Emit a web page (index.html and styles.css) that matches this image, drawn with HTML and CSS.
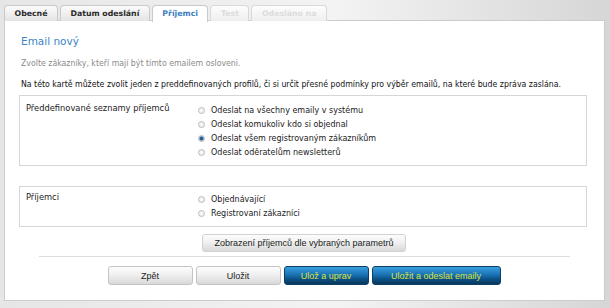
FILE: index.html
```html
<!DOCTYPE html>
<html lang="cs">
<head>
    <meta charset="UTF-8">
    <title>Email nový - Příjemci</title>
    <link rel="stylesheet" href="styles.css">
</head>
<body>
    <div class="page">
        <ul class="tabs">
            <li class="tab">Obecné</li>
            <li class="tab">Datum odeslání</li>
            <li class="tab active">Příjemci</li>
            <li class="tab disabled">Test</li>
            <li class="tab disabled">Odesláno na</li>
        </ul>

        <div class="panel">
            <h1>Email nový</h1>
            <p class="hint">Zvolte zákazníky, kteří mají být tímto emailem osloveni.</p>
            <p class="intro">Na této kartě můžete zvolit jeden z preddefinovaných profilů, či si určit přesné podmínky pro výběr emailů, na které bude zpráva zaslána.</p>

            <div class="field-box">
                <div class="field-label">Předdefinované seznamy příjemců</div>
                <div class="options">
                    <label class="option"><input type="radio" name="preset">Odeslat na všechny emaily v systému</label>
                    <label class="option"><input type="radio" name="preset">Odeslat komukoliv kdo si objednal</label>
                    <label class="option"><input type="radio" name="preset" checked>Odeslat všem registrovaným zákazníkům</label>
                    <label class="option"><input type="radio" name="preset">Odeslat oděratelům newsletterů</label>
                </div>
            </div>

            <div class="field-box second">
                <div class="field-label">Příjemci</div>
                <div class="options">
                    <label class="option"><input type="radio" name="recipients">Objednávající</label>
                    <label class="option"><input type="radio" name="recipients">Registrovaní zákazníci</label>
                </div>
            </div>

            <div class="preview">
                <button type="button" class="btn btn-preview">Zobrazení příjemců dle vybraných parametrů</button>
            </div>

            <hr class="divider">

            <div class="actions">
                <button type="button" class="btn">Zpět</button>
                <button type="button" class="btn">Uložit</button>
                <button type="button" class="btn btn-blue">Ulož a uprav</button>
                <button type="button" class="btn btn-blue btn-send">Uložit a odeslat emaily</button>
            </div>
        </div>
    </div>
</body>
</html>
```

FILE: styles.css
```css
* {
    margin: 0;
    padding: 0;
    box-sizing: border-box;
}

body {
    font-family: 'DejaVu Sans', Verdana, sans-serif;
    background: linear-gradient(to right, #e6e6e6 0%, #f3f3f3 55%, #d6d6d6 100%);
    height: 308px;
    overflow: hidden;
}

.page {
    padding: 5px 5px 0 4px;
}

/* zalozky */
.tabs {
    list-style: none;
    display: flex;
    gap: 2px;
    height: 16px;
    margin-bottom: -1px;
}

.tab {
    position: relative;
    z-index: 1;
    height: 16px;
    padding: 0 9.5px;
    font-size: 7.8px;
    font-weight: bold;
    line-height: 15px;
    color: #2b2b2b;
    background: linear-gradient(#fbfbfb, #e4e4e4);
    border: 1px solid #c9c9c9;
    border-bottom: none;
    border-radius: 4px 4px 0 0;
}

.tab.active {
    height: 17px;
    color: #3a7ebf;
    background: #fff;
}

.tab.disabled {
    color: #dcdcdc;
    background: linear-gradient(#fdfdfd, #eeeeee);
    border-color: #d9d9d9;
}

/* obsah */
.panel {
    background: #fff;
    border: 1px solid #cccccc;
    padding: 14px 17px 15px 16px;
}

h1 {
    font-size: 10.5px;
    font-weight: normal;
    line-height: 13px;
    color: #3c86c6;
}

.hint,
.intro {
    font-family: 'DejaVu Sans Condensed', 'Liberation Sans', sans-serif;
    font-size: 8.7px;
    line-height: 11px;
    margin-top: 10px;
}

.hint {
    color: #8a8a8a;
}

.intro {
    color: #111;
}

.field-box {
    display: flex;
    margin: 5px 0 0 -2px;
    padding: 7px 6px 6px 6px;
    border: 1px solid #d6d6d6;
    font-size: 8px;
    color: #222;
}

.field-box.second {
    margin-top: 20px;
    padding-top: 5px;
}

.field-label {
    width: 172px;
    font-size: 8.3px;
    line-height: 11px;
}

.option {
    display: flex;
    align-items: center;
    height: 14px;
}

.option input {
    appearance: none;
    width: 7px;
    height: 7px;
    margin-right: 6px;
    border: 1px solid #bcbcbc;
    border-radius: 50%;
    background: radial-gradient(circle, #ffffff 0, #e3e3e3 100%);
}

.option input:checked {
    background: radial-gradient(circle, #1d4f7e 0, #2f6a9e 1.5px, #b9cfe2 2.5px, #e6e6e6 3.5px);
}

/* tlacitka */
.btn {
    height: 19px;
    font-family: 'Liberation Sans', Arial, sans-serif;
    font-size: 9px;
    color: #222;
    background: linear-gradient(#fdfdfd, #f0f0f0 45%, #d9d9d9);
    border: 1px solid #c4c4c4;
    border-radius: 3px;
    cursor: pointer;
}

.preview {
    display: flex;
    justify-content: center;
    margin-top: 7px;
}

.btn-preview {
    width: 204px;
    height: 18px;
    border-color: #d2d2d2;
}

.divider {
    border: none;
    border-top: 1px solid #dedede;
    margin: 4px 17px 0 18px;
}

.actions {
    display: flex;
    justify-content: center;
    gap: 3px;
    margin-top: 9px;
}

.actions .btn {
    width: 85px;
}

.btn-blue {
    color: #d9e43a;
    background: linear-gradient(#3a9fe0, #1a73b5 45%, #0b4c7e 75%, #06375d);
    border-color: #0d3f66;
}

.actions .btn-send {
    width: 129px;
}
```
